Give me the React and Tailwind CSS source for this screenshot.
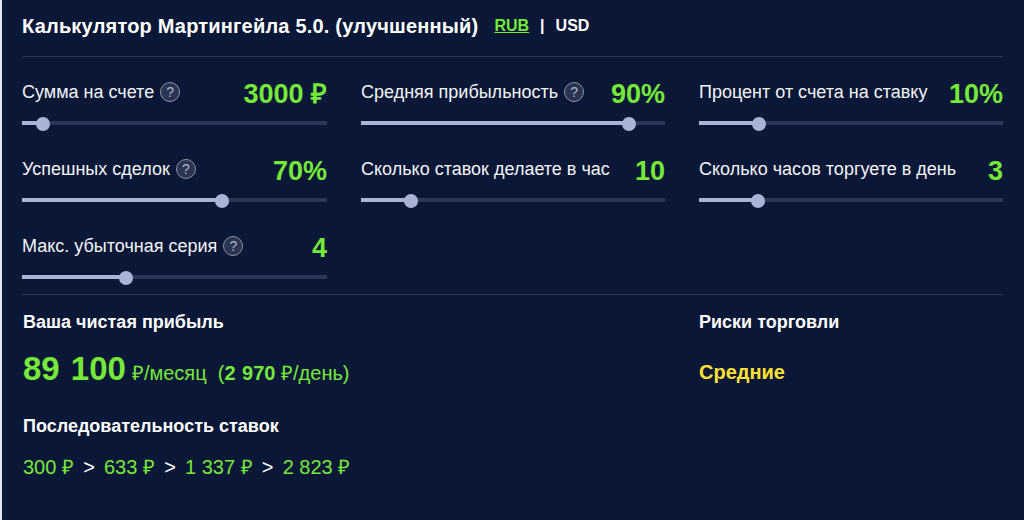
function Help() {
  return (
    <span className="inline-flex items-center justify-center w-5 h-5 rounded-full border border-[#8a92a6] bg-[#2b3552] text-[#aeb4c4] text-[14px] leading-none ml-[6px] shrink-0">?</span>
  );
}
function Slider({ thumb, help, label, value }) {
  return (
    <div className="h-[77px] flex flex-col">
      <div className="flex items-start justify-between h-[32px]">
        <div className="flex items-center mt-[4px] text-[18px] leading-[24px] text-[#f3f4f6] whitespace-nowrap">
          <span>{label}</span>
          {help && <Help />}
        </div>
        <div className="mt-[5px] text-[27px] font-bold text-[#76e83a] leading-[27px]">{value}</div>
      </div>
      <div className="relative h-[4px] mt-[13px] bg-[#2c3659]">
        <div className="h-full bg-[#a8b4d6]" style={{ width: thumb }} />
        <div className="absolute top-[-4px] w-[14px] h-[14px] rounded-full bg-[#a8b4d6]" style={{ left: thumb - 7 }} />
      </div>
    </div>
  );
}
const sliders = [
  { label: "Сумма на счете", help: true, value: "3000 ₽", thumb: 21 },
  { label: "Средняя прибыльность", help: true, value: "90%", thumb: 268 },
  { label: "Процент от счета на ставку", value: "10%", thumb: 60 },
  { label: "Успешных сделок", help: true, value: "70%", thumb: 200 },
  { label: "Сколько ставок делаете в час", value: "10", thumb: 50 },
  { label: "Сколько часов торгуете в день", value: "3", thumb: 59 },
  { label: "Макс. убыточная серия", help: true, value: "4", thumb: 104 },
];
function Amount({ children }) {
  return <span className="text-[#76e83a]">{children}</span>;
}
export default function App() {
  return (
    <div className="w-[1024px] h-[520px] overflow-hidden bg-[#e5e7eb] pl-[2px]" style={{ fontFamily: '"Liberation Sans", Arial, sans-serif' }}>
      <div className="h-full bg-[#0a1736] pl-[20px] pr-[21px] text-white">
        <div className="h-[57px] flex items-center border-b border-[#2c3650] pb-[4px]">
          <span className="text-[20px] tracking-[0.2px] font-bold">Калькулятор Мартингейла 5.0. (улучшенный)</span>
          <span className="ml-[16px] text-[16px] font-bold text-[#76e83a] underline">RUB</span>
          <span className="mx-[11px] text-[16px] font-bold">|</span>
          <span className="text-[16px] font-bold">USD</span>
        </div>
        <div className="grid grid-cols-[305px_304px_304px] gap-x-[34px] pt-[19px] h-[238px] border-b border-[#2c3650]">
          {sliders.map((s) => <Slider key={s.label} {...s} />)}
        </div>
        <div className="flex pt-[17px]">
          <div className="w-[677px] pl-[1px]">
            <div className="text-[18px] font-bold leading-[20px]">Ваша чистая прибыль</div>
            <div className="mt-[12px] h-[40px] flex items-baseline text-[#76e83a] text-[20px] whitespace-pre">
              <span className="text-[33px] font-bold [word-spacing:2px]">89 100</span>
              <span className="ml-[6px]">₽/месяц  (</span><b className="[word-spacing:1px]">2 970</b><span> ₽/день)</span>
            </div>
            <div className="mt-[32px] text-[18px] font-bold leading-[20px]">Последовательность ставок</div>
            <div className="mt-[19px] flex gap-[9.2px] text-[20px] leading-[24px] whitespace-pre">
              <Amount>300 ₽</Amount><span>&gt;</span><Amount>633 ₽</Amount><span>&gt;</span><Amount>1 337 ₽</Amount><span>&gt;</span><Amount>2 823 ₽</Amount>
            </div>
          </div>
          <div>
            <div className="text-[18px] font-bold leading-[20px]">Риски торговли</div>
            <div className="mt-[25px] text-[20px] font-bold text-[#ffe135]">Средние</div>
          </div>
        </div>
      </div>
    </div>
  );
}
